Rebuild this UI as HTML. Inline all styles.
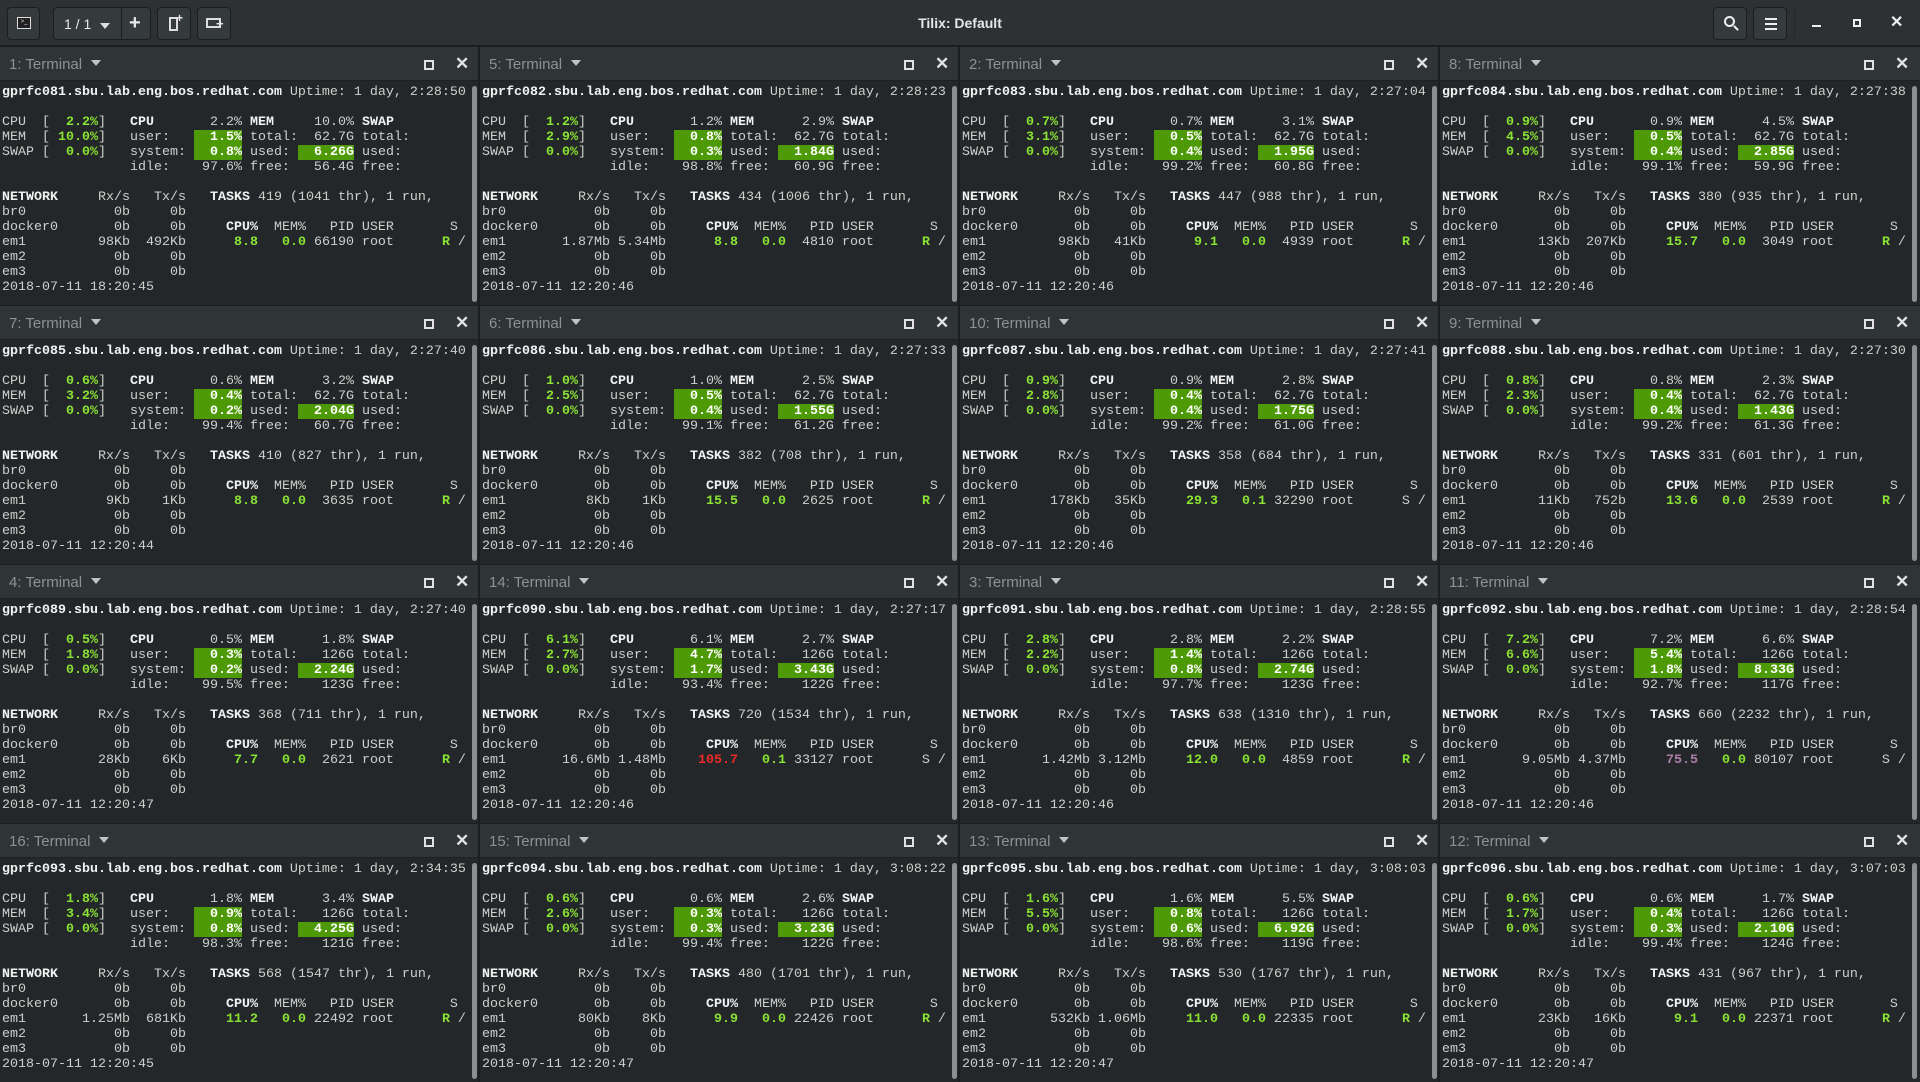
<!DOCTYPE html>
<html><head><meta charset="utf-8"><style>
*{margin:0;padding:0;box-sizing:border-box}
body{width:1920px;height:1080px;background:#1c1f20;overflow:hidden;font-family:"Liberation Sans",sans-serif;position:relative}
#tb{position:absolute;left:0;top:0;width:1920px;height:46px;background:#2d3133;border-bottom:1px solid #1a1c1d}
.btn{position:absolute;top:7px;height:33px;background:#353a3c;border:1px solid #1b1e1f;border-radius:4px;color:#e8e8e8}
#title{position:absolute;left:0;width:1920px;top:15px;text-align:center;color:#e6e6e6;font-weight:bold;font-size:14px}
.pane{position:absolute;width:480px;height:258px;background:#232729;overflow:hidden}
.hd{position:absolute;left:0;top:0;width:100%;height:34px;background:#2f3436;border-bottom:1px solid #1f2224}
.lbl{position:absolute;left:9px;top:9px;font-size:15px;color:#8d9294}
.tri{display:inline-block;width:0;height:0;border-left:5px solid transparent;border-right:5px solid transparent;border-top:6px solid #c0c3c4;margin-left:9px;vertical-align:3px}
.mx{position:absolute;left:424px;top:13px;width:10px;height:10px;border:2px solid #e2e2e2}
.cl{position:absolute;left:455px;top:7px;color:#e2e2e2;font-size:17px;font-weight:bold}
.sb{position:absolute;left:472px;top:39px;width:5px;height:216px;background:#8c8f90;border-radius:3px}
pre{position:absolute;left:2px;top:38px;font-family:"Liberation Mono",monospace;font-size:13.33px;line-height:15px;color:#cdd0cb}
pre b{color:#f2f2f2}
pre i{font-style:normal;color:#8ae234;font-weight:bold}
pre u{text-decoration:none;background:#4e9a06;color:#fff;font-weight:bold}
pre .r{color:#ef2929;font-weight:bold}
pre .p{color:#ad7fa8;font-weight:bold}
</style></head><body>
<div id="tb">
 <div class="btn" style="left:7px;width:33px"><div style="position:absolute;left:9px;top:9px;width:14px;height:12px;border:1px solid #ddd;background:#222;font-size:6px;color:#ddd;line-height:8px;text-align:center">&gt;_</div></div>
 <div class="btn" style="left:53px;width:98px"><span style="position:absolute;left:10px;top:8px;font-size:14px">1 / 1</span><span class="tri" style="position:absolute;left:37px;top:15px;border-top-color:#ddd"></span><div style="position:absolute;left:67px;top:0;width:1px;height:31px;background:#1b1e1f"></div><span style="position:absolute;left:75px;top:4px;font-size:20px;font-weight:bold">+</span></div>
 <div class="btn" style="left:157px;width:34px"><div style="position:absolute;left:11px;top:9px;width:9px;height:14px;border:2px solid #ddd"></div><span style="position:absolute;left:18px;top:3px;font-size:12px;font-weight:bold">+</span></div>
 <div class="btn" style="left:197px;width:34px"><div style="position:absolute;left:8px;top:10px;width:15px;height:10px;border:2px solid #ddd"></div><span style="position:absolute;left:18px;top:8px;font-size:13px;font-weight:bold">+</span></div>
 <div id="title">Tilix: Default</div>
 <div class="btn" style="left:1713px;width:34px"><div style="position:absolute;left:10px;top:8px;width:11px;height:11px;border:2px solid #eee;border-radius:50%"></div><div style="position:absolute;left:19px;top:19px;width:6px;height:2px;background:#eee;transform:rotate(45deg)"></div></div>
 <div class="btn" style="left:1753px;width:34px"><div style="position:absolute;left:11px;top:10px;width:12px;height:2px;background:#eee;box-shadow:0 5px #eee,0 10px #eee"></div></div>
 <div style="position:absolute;left:1794px;top:8px;width:1px;height:30px;background:#25292a"></div>
 <div style="position:absolute;left:1812px;top:25px;width:9px;height:2px;background:#eee"></div>
 <div style="position:absolute;left:1853px;top:19px;width:8px;height:8px;border:2px solid #eee"></div>
 <div style="position:absolute;left:1890px;top:12px;color:#eee;font-size:16px;font-weight:bold">✕</div>
</div>

<!-- Row 1 -->
<div class="pane" style="left:0;top:47px;width:478px"><div class="hd"><div class="lbl">1: Terminal<span class="tri"></span></div><div class="mx"></div><div class="cl">✕</div></div><div class="sb"></div><pre><b>gprfc081.sbu.lab.eng.bos.redhat.com</b> Uptime: 1 day, 2:28:50

CPU  [<i>  2.2%</i>]   <b>CPU</b>       2.2% <b>MEM</b>     10.0% <b>SWAP</b>
MEM  [<i> 10.0%</i>]   user:   <u>  1.5%</u> total:  62.7G total:
SWAP [<i>  0.0%</i>]   system: <u>  0.8%</u> used: <u>  6.26G</u> used:
                idle:    97.6% free:   56.4G free:

<b>NETWORK</b>     Rx/s   Tx/s   <b>TASKS</b> 419 (1041 thr), 1 run,
br0           0b     0b
docker0       0b     0b     <b>CPU%</b>  MEM%   PID USER       S
em1         98Kb  492Kb      <i>8.8</i>   <i>0.0</i> 66190 root      <i>R</i> /
em2           0b     0b
em3           0b     0b
2018-07-11 18:20:45</pre></div>

<div class="pane" style="left:480px;top:47px;width:478px"><div class="hd"><div class="lbl">5: Terminal<span class="tri"></span></div><div class="mx"></div><div class="cl">✕</div></div><div class="sb"></div><pre><b>gprfc082.sbu.lab.eng.bos.redhat.com</b> Uptime: 1 day, 2:28:23

CPU  [<i>  1.2%</i>]   <b>CPU</b>       1.2% <b>MEM</b>      2.9% <b>SWAP</b>
MEM  [<i>  2.9%</i>]   user:   <u>  0.8%</u> total:  62.7G total:
SWAP [<i>  0.0%</i>]   system: <u>  0.3%</u> used: <u>  1.84G</u> used:
                idle:    98.8% free:   60.9G free:

<b>NETWORK</b>     Rx/s   Tx/s   <b>TASKS</b> 434 (1006 thr), 1 run,
br0           0b     0b
docker0       0b     0b     <b>CPU%</b>  MEM%   PID USER       S
em1       1.87Mb 5.34Mb      <i>8.8</i>   <i>0.0</i>  4810 root      <i>R</i> /
em2           0b     0b
em3           0b     0b
2018-07-11 12:20:46</pre></div>

<div class="pane" style="left:960px;top:47px;width:478px"><div class="hd"><div class="lbl">2: Terminal<span class="tri"></span></div><div class="mx"></div><div class="cl">✕</div></div><div class="sb"></div><pre><b>gprfc083.sbu.lab.eng.bos.redhat.com</b> Uptime: 1 day, 2:27:04

CPU  [<i>  0.7%</i>]   <b>CPU</b>       0.7% <b>MEM</b>      3.1% <b>SWAP</b>
MEM  [<i>  3.1%</i>]   user:   <u>  0.5%</u> total:  62.7G total:
SWAP [<i>  0.0%</i>]   system: <u>  0.4%</u> used: <u>  1.95G</u> used:
                idle:    99.2% free:   60.8G free:

<b>NETWORK</b>     Rx/s   Tx/s   <b>TASKS</b> 447 (988 thr), 1 run,
br0           0b     0b
docker0       0b     0b     <b>CPU%</b>  MEM%   PID USER       S
em1         98Kb   41Kb      <i>9.1</i>   <i>0.0</i>  4939 root      <i>R</i> /
em2           0b     0b
em3           0b     0b
2018-07-11 12:20:46</pre></div>

<div class="pane" style="left:1440px;top:47px"><div class="hd"><div class="lbl">8: Terminal<span class="tri"></span></div><div class="mx"></div><div class="cl">✕</div></div><div class="sb"></div><pre><b>gprfc084.sbu.lab.eng.bos.redhat.com</b> Uptime: 1 day, 2:27:38

CPU  [<i>  0.9%</i>]   <b>CPU</b>       0.9% <b>MEM</b>      4.5% <b>SWAP</b>
MEM  [<i>  4.5%</i>]   user:   <u>  0.5%</u> total:  62.7G total:
SWAP [<i>  0.0%</i>]   system: <u>  0.4%</u> used: <u>  2.85G</u> used:
                idle:    99.1% free:   59.9G free:

<b>NETWORK</b>     Rx/s   Tx/s   <b>TASKS</b> 380 (935 thr), 1 run,
br0           0b     0b
docker0       0b     0b     <b>CPU%</b>  MEM%   PID USER       S
em1         13Kb  207Kb     <i>15.7</i>   <i>0.0</i>  3049 root      <i>R</i> /
em2           0b     0b
em3           0b     0b
2018-07-11 12:20:46</pre></div>

<!-- Row 2 -->
<div class="pane" style="left:0;top:306px;width:478px"><div class="hd"><div class="lbl">7: Terminal<span class="tri"></span></div><div class="mx"></div><div class="cl">✕</div></div><div class="sb"></div><pre><b>gprfc085.sbu.lab.eng.bos.redhat.com</b> Uptime: 1 day, 2:27:40

CPU  [<i>  0.6%</i>]   <b>CPU</b>       0.6% <b>MEM</b>      3.2% <b>SWAP</b>
MEM  [<i>  3.2%</i>]   user:   <u>  0.4%</u> total:  62.7G total:
SWAP [<i>  0.0%</i>]   system: <u>  0.2%</u> used: <u>  2.04G</u> used:
                idle:    99.4% free:   60.7G free:

<b>NETWORK</b>     Rx/s   Tx/s   <b>TASKS</b> 410 (827 thr), 1 run,
br0           0b     0b
docker0       0b     0b     <b>CPU%</b>  MEM%   PID USER       S
em1          9Kb    1Kb      <i>8.8</i>   <i>0.0</i>  3635 root      <i>R</i> /
em2           0b     0b
em3           0b     0b
2018-07-11 12:20:44</pre></div>

<div class="pane" style="left:480px;top:306px;width:478px"><div class="hd"><div class="lbl">6: Terminal<span class="tri"></span></div><div class="mx"></div><div class="cl">✕</div></div><div class="sb"></div><pre><b>gprfc086.sbu.lab.eng.bos.redhat.com</b> Uptime: 1 day, 2:27:33

CPU  [<i>  1.0%</i>]   <b>CPU</b>       1.0% <b>MEM</b>      2.5% <b>SWAP</b>
MEM  [<i>  2.5%</i>]   user:   <u>  0.5%</u> total:  62.7G total:
SWAP [<i>  0.0%</i>]   system: <u>  0.4%</u> used: <u>  1.55G</u> used:
                idle:    99.1% free:   61.2G free:

<b>NETWORK</b>     Rx/s   Tx/s   <b>TASKS</b> 382 (708 thr), 1 run,
br0           0b     0b
docker0       0b     0b     <b>CPU%</b>  MEM%   PID USER       S
em1          8Kb    1Kb     <i>15.5</i>   <i>0.0</i>  2625 root      <i>R</i> /
em2           0b     0b
em3           0b     0b
2018-07-11 12:20:46</pre></div>

<div class="pane" style="left:960px;top:306px;width:478px"><div class="hd"><div class="lbl">10: Terminal<span class="tri"></span></div><div class="mx"></div><div class="cl">✕</div></div><div class="sb"></div><pre><b>gprfc087.sbu.lab.eng.bos.redhat.com</b> Uptime: 1 day, 2:27:41

CPU  [<i>  0.9%</i>]   <b>CPU</b>       0.9% <b>MEM</b>      2.8% <b>SWAP</b>
MEM  [<i>  2.8%</i>]   user:   <u>  0.4%</u> total:  62.7G total:
SWAP [<i>  0.0%</i>]   system: <u>  0.4%</u> used: <u>  1.75G</u> used:
                idle:    99.2% free:   61.0G free:

<b>NETWORK</b>     Rx/s   Tx/s   <b>TASKS</b> 358 (684 thr), 1 run,
br0           0b     0b
docker0       0b     0b     <b>CPU%</b>  MEM%   PID USER       S
em1        178Kb   35Kb     <i>29.3</i>   <i>0.1</i> 32290 root      S /
em2           0b     0b
em3           0b     0b
2018-07-11 12:20:46</pre></div>

<div class="pane" style="left:1440px;top:306px"><div class="hd"><div class="lbl">9: Terminal<span class="tri"></span></div><div class="mx"></div><div class="cl">✕</div></div><div class="sb"></div><pre><b>gprfc088.sbu.lab.eng.bos.redhat.com</b> Uptime: 1 day, 2:27:30

CPU  [<i>  0.8%</i>]   <b>CPU</b>       0.8% <b>MEM</b>      2.3% <b>SWAP</b>
MEM  [<i>  2.3%</i>]   user:   <u>  0.4%</u> total:  62.7G total:
SWAP [<i>  0.0%</i>]   system: <u>  0.4%</u> used: <u>  1.43G</u> used:
                idle:    99.2% free:   61.3G free:

<b>NETWORK</b>     Rx/s   Tx/s   <b>TASKS</b> 331 (601 thr), 1 run,
br0           0b     0b
docker0       0b     0b     <b>CPU%</b>  MEM%   PID USER       S
em1         11Kb   752b     <i>13.6</i>   <i>0.0</i>  2539 root      <i>R</i> /
em2           0b     0b
em3           0b     0b
2018-07-11 12:20:46</pre></div>

<!-- Row 3 -->
<div class="pane" style="left:0;top:565px;width:478px"><div class="hd"><div class="lbl">4: Terminal<span class="tri"></span></div><div class="mx"></div><div class="cl">✕</div></div><div class="sb"></div><pre><b>gprfc089.sbu.lab.eng.bos.redhat.com</b> Uptime: 1 day, 2:27:40

CPU  [<i>  0.5%</i>]   <b>CPU</b>       0.5% <b>MEM</b>      1.8% <b>SWAP</b>
MEM  [<i>  1.8%</i>]   user:   <u>  0.3%</u> total:   126G total:
SWAP [<i>  0.0%</i>]   system: <u>  0.2%</u> used: <u>  2.24G</u> used:
                idle:    99.5% free:    123G free:

<b>NETWORK</b>     Rx/s   Tx/s   <b>TASKS</b> 368 (711 thr), 1 run,
br0           0b     0b
docker0       0b     0b     <b>CPU%</b>  MEM%   PID USER       S
em1         28Kb    6Kb      <i>7.7</i>   <i>0.0</i>  2621 root      <i>R</i> /
em2           0b     0b
em3           0b     0b
2018-07-11 12:20:47</pre></div>

<div class="pane" style="left:480px;top:565px;width:478px"><div class="hd"><div class="lbl">14: Terminal<span class="tri"></span></div><div class="mx"></div><div class="cl">✕</div></div><div class="sb"></div><pre><b>gprfc090.sbu.lab.eng.bos.redhat.com</b> Uptime: 1 day, 2:27:17

CPU  [<i>  6.1%</i>]   <b>CPU</b>       6.1% <b>MEM</b>      2.7% <b>SWAP</b>
MEM  [<i>  2.7%</i>]   user:   <u>  4.7%</u> total:   126G total:
SWAP [<i>  0.0%</i>]   system: <u>  1.7%</u> used: <u>  3.43G</u> used:
                idle:    93.4% free:    122G free:

<b>NETWORK</b>     Rx/s   Tx/s   <b>TASKS</b> 720 (1534 thr), 1 run,
br0           0b     0b
docker0       0b     0b     <b>CPU%</b>  MEM%   PID USER       S
em1       16.6Mb 1.48Mb    <span class="r">105.7</span>   <i>0.1</i> 33127 root      S /
em2           0b     0b
em3           0b     0b
2018-07-11 12:20:46</pre></div>

<div class="pane" style="left:960px;top:565px;width:478px"><div class="hd"><div class="lbl">3: Terminal<span class="tri"></span></div><div class="mx"></div><div class="cl">✕</div></div><div class="sb"></div><pre><b>gprfc091.sbu.lab.eng.bos.redhat.com</b> Uptime: 1 day, 2:28:55

CPU  [<i>  2.8%</i>]   <b>CPU</b>       2.8% <b>MEM</b>      2.2% <b>SWAP</b>
MEM  [<i>  2.2%</i>]   user:   <u>  1.4%</u> total:   126G total:
SWAP [<i>  0.0%</i>]   system: <u>  0.8%</u> used: <u>  2.74G</u> used:
                idle:    97.7% free:    123G free:

<b>NETWORK</b>     Rx/s   Tx/s   <b>TASKS</b> 638 (1310 thr), 1 run,
br0           0b     0b
docker0       0b     0b     <b>CPU%</b>  MEM%   PID USER       S
em1       1.42Mb 3.12Mb     <i>12.0</i>   <i>0.0</i>  4859 root      <i>R</i> /
em2           0b     0b
em3           0b     0b
2018-07-11 12:20:46</pre></div>

<div class="pane" style="left:1440px;top:565px"><div class="hd"><div class="lbl">11: Terminal<span class="tri"></span></div><div class="mx"></div><div class="cl">✕</div></div><div class="sb"></div><pre><b>gprfc092.sbu.lab.eng.bos.redhat.com</b> Uptime: 1 day, 2:28:54

CPU  [<i>  7.2%</i>]   <b>CPU</b>       7.2% <b>MEM</b>      6.6% <b>SWAP</b>
MEM  [<i>  6.6%</i>]   user:   <u>  5.4%</u> total:   126G total:
SWAP [<i>  0.0%</i>]   system: <u>  1.8%</u> used: <u>  8.33G</u> used:
                idle:    92.7% free:    117G free:

<b>NETWORK</b>     Rx/s   Tx/s   <b>TASKS</b> 660 (2232 thr), 1 run,
br0           0b     0b
docker0       0b     0b     <b>CPU%</b>  MEM%   PID USER       S
em1       9.05Mb 4.37Mb     <span class="p">75.5</span>   <i>0.0</i> 80107 root      S /
em2           0b     0b
em3           0b     0b
2018-07-11 12:20:46</pre></div>

<!-- Row 4 -->
<div class="pane" style="left:0;top:824px;width:478px"><div class="hd"><div class="lbl">16: Terminal<span class="tri"></span></div><div class="mx"></div><div class="cl">✕</div></div><div class="sb"></div><pre><b>gprfc093.sbu.lab.eng.bos.redhat.com</b> Uptime: 1 day, 2:34:35

CPU  [<i>  1.8%</i>]   <b>CPU</b>       1.8% <b>MEM</b>      3.4% <b>SWAP</b>
MEM  [<i>  3.4%</i>]   user:   <u>  0.9%</u> total:   126G total:
SWAP [<i>  0.0%</i>]   system: <u>  0.8%</u> used: <u>  4.25G</u> used:
                idle:    98.3% free:    121G free:

<b>NETWORK</b>     Rx/s   Tx/s   <b>TASKS</b> 568 (1547 thr), 1 run,
br0           0b     0b
docker0       0b     0b     <b>CPU%</b>  MEM%   PID USER       S
em1       1.25Mb  681Kb     <i>11.2</i>   <i>0.0</i> 22492 root      <i>R</i> /
em2           0b     0b
em3           0b     0b
2018-07-11 12:20:45</pre></div>

<div class="pane" style="left:480px;top:824px;width:478px"><div class="hd"><div class="lbl">15: Terminal<span class="tri"></span></div><div class="mx"></div><div class="cl">✕</div></div><div class="sb"></div><pre><b>gprfc094.sbu.lab.eng.bos.redhat.com</b> Uptime: 1 day, 3:08:22

CPU  [<i>  0.6%</i>]   <b>CPU</b>       0.6% <b>MEM</b>      2.6% <b>SWAP</b>
MEM  [<i>  2.6%</i>]   user:   <u>  0.3%</u> total:   126G total:
SWAP [<i>  0.0%</i>]   system: <u>  0.3%</u> used: <u>  3.23G</u> used:
                idle:    99.4% free:    122G free:

<b>NETWORK</b>     Rx/s   Tx/s   <b>TASKS</b> 480 (1701 thr), 1 run,
br0           0b     0b
docker0       0b     0b     <b>CPU%</b>  MEM%   PID USER       S
em1         80Kb    8Kb      <i>9.9</i>   <i>0.0</i> 22426 root      <i>R</i> /
em2           0b     0b
em3           0b     0b
2018-07-11 12:20:47</pre></div>

<div class="pane" style="left:960px;top:824px;width:478px"><div class="hd"><div class="lbl">13: Terminal<span class="tri"></span></div><div class="mx"></div><div class="cl">✕</div></div><div class="sb"></div><pre><b>gprfc095.sbu.lab.eng.bos.redhat.com</b> Uptime: 1 day, 3:08:03

CPU  [<i>  1.6%</i>]   <b>CPU</b>       1.6% <b>MEM</b>      5.5% <b>SWAP</b>
MEM  [<i>  5.5%</i>]   user:   <u>  0.8%</u> total:   126G total:
SWAP [<i>  0.0%</i>]   system: <u>  0.6%</u> used: <u>  6.92G</u> used:
                idle:    98.6% free:    119G free:

<b>NETWORK</b>     Rx/s   Tx/s   <b>TASKS</b> 530 (1767 thr), 1 run,
br0           0b     0b
docker0       0b     0b     <b>CPU%</b>  MEM%   PID USER       S
em1        532Kb 1.06Mb     <i>11.0</i>   <i>0.0</i> 22335 root      <i>R</i> /
em2           0b     0b
em3           0b     0b
2018-07-11 12:20:47</pre></div>

<div class="pane" style="left:1440px;top:824px"><div class="hd"><div class="lbl">12: Terminal<span class="tri"></span></div><div class="mx"></div><div class="cl">✕</div></div><div class="sb"></div><pre><b>gprfc096.sbu.lab.eng.bos.redhat.com</b> Uptime: 1 day, 3:07:03

CPU  [<i>  0.6%</i>]   <b>CPU</b>       0.6% <b>MEM</b>      1.7% <b>SWAP</b>
MEM  [<i>  1.7%</i>]   user:   <u>  0.4%</u> total:   126G total:
SWAP [<i>  0.0%</i>]   system: <u>  0.3%</u> used: <u>  2.10G</u> used:
                idle:    99.4% free:    124G free:

<b>NETWORK</b>     Rx/s   Tx/s   <b>TASKS</b> 431 (967 thr), 1 run,
br0           0b     0b
docker0       0b     0b     <b>CPU%</b>  MEM%   PID USER       S
em1         23Kb   16Kb      <i>9.1</i>   <i>0.0</i> 22371 root      <i>R</i> /
em2           0b     0b
em3           0b     0b
2018-07-11 12:20:47</pre></div>
</body></html>
